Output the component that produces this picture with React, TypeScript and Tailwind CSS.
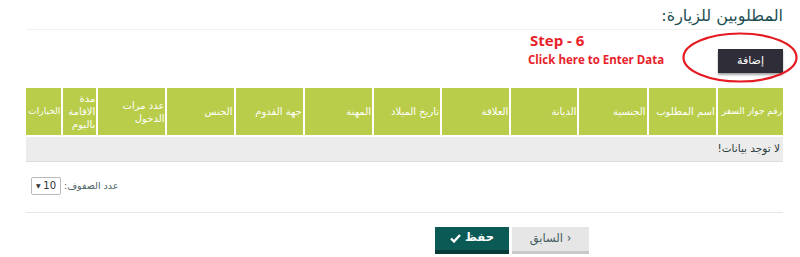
import React from 'react';

const columns = [
  { label: 'رقم جواز السفر', width: 'w-[66px]', extra: 'whitespace-nowrap text-[9px] tracking-[-0.6px]' },
  { label: 'اسم المطلوب', width: 'w-[69px]', extra: 'text-[10px]' },
  { label: 'الجنسية', width: 'w-[69px]', extra: 'text-[10px]' },
  { label: 'الديانة', width: 'w-[68px]', extra: 'text-[10px]' },
  { label: 'العلاقة', width: 'w-[69px]', extra: 'text-[10px]' },
  { label: 'تاريخ الميلاد', width: 'w-[68px]', extra: 'text-[10px]' },
  { label: 'المهنة', width: 'w-[69px]', extra: 'text-[10px]' },
  { label: 'جهة القدوم', width: 'w-[69px]', extra: 'text-[10px]' },
  { label: 'الجنس', width: 'w-[68px]', extra: 'text-[10px]' },
  { label: 'عدد مرات الدخول', width: 'w-[69px]', extra: 'text-[10px]' },
  { label: 'مدة الاقامة باليوم', width: 'w-[35px]', extra: 'text-[10px]' },
  { label: 'الخيارات', width: 'w-[36px]', extra: 'whitespace-nowrap text-[9px] tracking-[-0.6px]' },
];

const arabic = "font-['DejaVu_Sans',sans-serif]";

export default function App() {
  return (
    <div className={`w-[800px] h-[257px] bg-white pl-[26px] pr-[17px] ${arabic}`}>
      {/* Title */}
      <div dir="rtl" className="h-[30px] border-b border-[#f1f1f1] pt-[6px]">
        <h2 className="text-[16px] leading-[20px] text-[#1d4e52]">المطلوبين للزيارة:</h2>
      </div>

      {/* Add button with annotation */}
      <div dir="rtl" className="relative h-[58px] pt-[17px]">
        <button className="w-[65px] h-[24px] bg-[#2f2e38] text-white text-[11px] shadow-[0_2px_2px_rgba(0,0,0,0.35)]">
          إضافة
        </button>

        <div dir="ltr" className="absolute left-[502px] top-[0px] w-[142px] font-['Open_Sans',sans-serif] font-bold text-[#e8222a]">
          <div className="text-[15px] leading-[20px] pl-[2px]">Step - 6</div>
          <div className="text-[11.5px] leading-[16px] mt-[2px]">Click here to Enter Data</div>
        </div>

        <svg className="absolute left-[656px] top-[2px]" width="116" height="51" viewBox="0 0 116 51">
          <ellipse cx="58" cy="25.5" rx="56.5" ry="24" fill="none" stroke="#e41b23" strokeWidth="2.2" />
        </svg>
      </div>

      {/* Table */}
      <table dir="rtl" className="w-[757px] table-fixed border-collapse">
        <colgroup>
          {columns.map((c) => (
            <col key={c.label} className={c.width} />
          ))}
        </colgroup>
        <thead>
          <tr className="h-[48px] bg-[#b9cd4b]">
            {columns.map((c) => (
              <th
                key={c.label}
                className={`border-x-2 border-white first:border-r-0 last:border-l-0 px-[1px] text-right align-middle leading-[13px] tracking-[-0.4px] font-normal text-white ${c.extra}`}
              >
                {c.label}
              </th>
            ))}
          </tr>
        </thead>
        <tbody>
          <tr className="h-[25px] bg-[#ececec] border-t-2 border-white border-b border-b-[#dcdcdc]">
            <td colSpan={12} className="px-[3px] text-right text-[10.5px] text-[#2c3e3e]">
              لا توجد بيانات!
            </td>
          </tr>
        </tbody>
      </table>

      {/* Page size */}
      <div className="h-[51px] border-b border-[#e6e6e6] flex items-start pt-[15px] pl-[5px] gap-[3px]">
        <div className="w-[30px] h-[18px] border border-[#b9b9b9] rounded-[2px] flex items-center justify-between px-[4px] text-[10px] text-[#333]">
          <span className="text-[6px]">▼</span>
          <span>10</span>
        </div>
        <span dir="rtl" className="text-[9.5px] leading-[18px] text-[#4d6464]">عدد الصفوف:</span>
      </div>

      {/* Footer buttons */}
      <div className="flex pt-[14px] pl-[409px] gap-[3px]">
        <button className="w-[74px] h-[27px] bg-[#0b5a56] border-b-[4px] border-[#083c3a] text-white text-[11.5px] font-bold flex items-center justify-center gap-[4px]">
          <svg width="11" height="9" viewBox="0 0 11 9">
            <path d="M1 4.5 L4 7.5 L10 1" fill="none" stroke="white" strokeWidth="2.4" />
          </svg>
          <span dir="rtl">حفظ</span>
        </button>
        <button className="w-[77px] h-[27px] bg-[#e6e6e6] border-b-[3px] border-[#c9c9c9] text-[#3e5d5d] text-[11.5px] flex items-center justify-center">
          <span dir="rtl">‹ السابق</span>
        </button>
      </div>
    </div>
  );
}
